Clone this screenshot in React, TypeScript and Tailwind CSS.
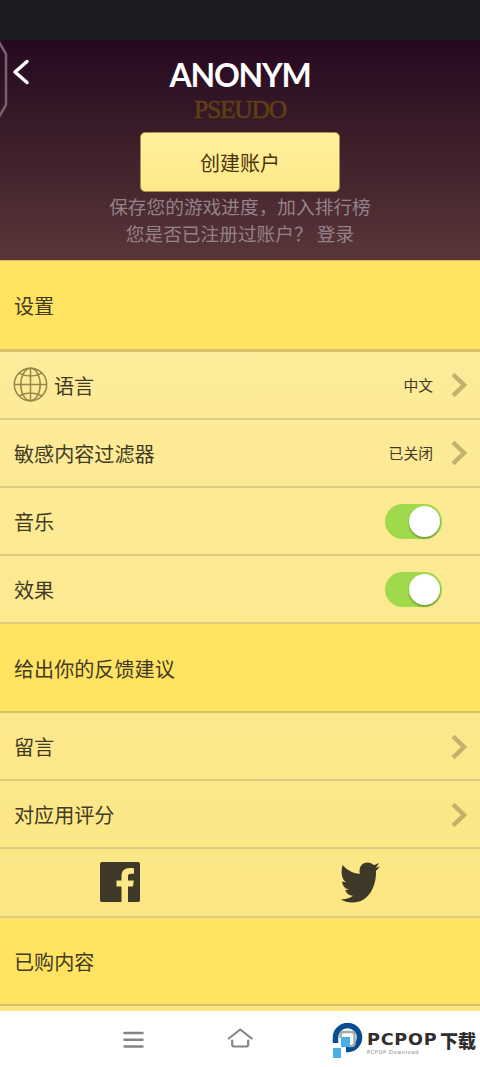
import type { ReactNode } from 'react'

const SANS = "font-['Noto_Sans_CJK_SC',sans-serif]"

function Chevron() {
  return (
    <svg width="16" height="26" viewBox="0 0 16 26" fill="none" stroke="#c3b16d" strokeWidth="4.4">
      <path d="M2 2.3 13 13 2 23.7" />
    </svg>
  )
}

function Globe() {
  return (
    <svg
      width="35"
      height="35"
      viewBox="0 0 35 35"
      fill="none"
      stroke="#948748"
      strokeWidth="1.5"
      className="mr-1.5 shrink-0"
    >
      <circle cx="17.5" cy="17.5" r="16.2" />
      <ellipse cx="17.5" cy="17.5" rx="9.7" ry="16.2" />
      <path d="M17.5 1.3v32.4M1.3 17.5h32.4M6 6.2q11.5 5.8 23 0M6 28.8q11.5-5.8 23 0" />
    </svg>
  )
}

function Toggle() {
  return (
    <div className="mr-[25px] flex h-[35px] w-[57px] items-center justify-end rounded-full bg-[#a0d94b] pr-0.5">
      <div className="h-[31px] w-[31px] rounded-full bg-white shadow-[0_1.5px_2px_rgba(50,90,20,0.55)]" />
    </div>
  )
}

function Section({ title, className = 'h-[88.6px] border-b-2' }: { title: string; className?: string }) {
  return (
    <div className={`flex shrink-0 items-center border-[#d7c16a] bg-[#ffe361] pt-[3px] pl-3.5 text-[20.1px] ${className}`}>
      {title}
    </div>
  )
}

function Row({ label, icon, children }: { label: string; icon?: ReactNode; children: ReactNode }) {
  return (
    <div className="flex h-[68.2px] shrink-0 items-center border-b-2 border-[#dccb83] pl-[13px] text-[20.1px]">
      {icon}
      <span className={icon ? 'pt-0.5' : 'pt-0.5 pl-px'}>{label}</span>
      <div className="ml-auto flex items-center pt-px pr-[13px]">{children}</div>
    </div>
  )
}

function Value({ text }: { text: string }) {
  return <span className="mr-[18px] pt-px text-[14.8px]">{text}</span>
}

function PcpopLogo() {
  return (
    <div className="flex items-start">
      <svg width="32" height="37" viewBox="0 0 32 37">
        <path d="M3.5 20V14.5a12 12 0 1 1 12.5 12h-2" fill="none" stroke="#074d91" strokeWidth="5.5" />
        <path d="M8.5 15v-3q0-3 3-3h8q3 0 3 3v8q0 3-3 3h-3" fill="none" stroke="#aaa9a8" strokeWidth="2.5" />
        <path d="M9 14h9v10H9v11H1V25h8z" fill="#4aaee8" />
      </svg>
      <div className="ml-[3px] mt-[7px] w-[112px] whitespace-nowrap text-[#302e2e]">
        <div className="flex h-5 items-center">
          <span className="w-[73px] origin-left scale-x-[1.1] font-['DejaVu_Sans',sans-serif] text-[16px] font-bold tracking-[0.7px]">
            PCPOP
          </span>
          <span className="text-[18px] font-black">下载</span>
        </div>
        <div className="font-['DejaVu_Sans',sans-serif] text-[5px] leading-none tracking-[0.65px] text-[#777]">
          PCPOP Download
        </div>
      </div>
    </div>
  )
}

export default function App() {
  return (
    <div className={`flex h-[1067px] w-[480px] flex-col overflow-hidden bg-white leading-none text-[#423a25] ${SANS}`}>
      <div className="h-10 shrink-0 bg-[#1c1c20]" />

      <header className="relative flex h-[220px] shrink-0 flex-col items-center bg-linear-to-b from-[#260821] via-[#3e202b] to-[#5a3638]">
        {/* edge handle */}
        <svg className="absolute left-0 top-0" width="9" height="80" viewBox="0 0 9 80" fill="none">
          <path d="M-1 2 6 14v51L-1 77" stroke="#76616f" strokeWidth="2.5" />
        </svg>
        <svg className="absolute left-3 top-[19px]" width="18" height="26" viewBox="0 0 18 26" fill="none">
          <path d="M15 2.5 3 13l12 10.5" stroke="white" strokeWidth="3.5" strokeLinecap="round" strokeLinejoin="round" />
        </svg>
        <h1 className="mt-[19px] h-8 font-['Lato',sans-serif] text-[32px] leading-8 font-bold tracking-[-1.2px] text-white">
          ANONYM
        </h1>
        <div className="mt-[7px] h-7 font-['Liberation_Serif',serif] text-[25.5px] leading-6 tracking-[-1.2px] text-[#5f3f13] [-webkit-text-stroke:0.6px_#5f3f13]">
          PSEUDO
        </div>
        <button className="mt-1.5 h-[60px] w-[200px] shrink-0 rounded-[5px] border border-[#a88f52] bg-linear-to-b from-[#fff09c] to-[#ffe989] pt-0.5 text-[20px] text-[#493508]">
          创建账户
        </button>
        <p className="text-center text-[18.7px] leading-[27px] whitespace-pre text-[#94828a]">
          保存您的游戏进度，加入排行榜
          <br />
          {'您是否已注册过账户？ 登录'}
        </p>
      </header>

      <main className="flex h-[751px] shrink-0 flex-col overflow-hidden bg-linear-to-b from-[#fdec9e] to-[#fce680]">
        <Section title="设置" className="h-[91.6px] border-t border-b-[3px]" />
        <Row label="语言" icon={<Globe />}>
          <Value text="中文" />
          <Chevron />
        </Row>
        <Row label="敏感内容过滤器">
          <Value text="已关闭" />
          <Chevron />
        </Row>
        <Row label="音乐">
          <Toggle />
        </Row>
        <Row label="效果">
          <Toggle />
        </Row>
        <Section title="给出你的反馈建议" />
        <Row label="留言">
          <Chevron />
        </Row>
        <Row label="对应用评分">
          <Chevron />
        </Row>
        <div className="grid h-[68.2px] shrink-0 grid-cols-2 place-items-center border-b-2 border-[#dccb83]">
          <svg width="40" height="40" viewBox="0 0 40 40" fill="#3e3829">
            <path d="M2 0h36a2 2 0 0 1 2 2v36a2 2 0 0 1-2 2H28V24.5h5l.8-6H28v-4c0-1.8.6-2.8 3-2.8h3V6.3C33 6.1 31.2 6 29.5 6 24.5 6 21.5 9 21.5 14v4.500h-5v6h5V40H2a2 2 0 0 1-2-2V2a2 2 0 0 1 2-2z" />
          </svg>
          <svg width="41" height="41" viewBox="0 0 41 41" fill="#3e3829">
            <path d="M2.5 3C7 8 12.5 11.3 19.8 12 18.5 5 22 .5 27.5.5c2.5 0 4.7 1 6.2 2.6 2-.4 3.7-1.2 5-2-.6 2-1.8 3.5-3.3 4.5 1.600-.2 3.2-.6 4.6-1.2-1.1 1.7-2.5 3.2-4 4.3C36.5 24 29 40.5 12.5 40.5 8 40.5 4 39.3 1 37.2c4.5.4 8.7-.8 12-3.4-4-.1-6.7-2.5-7.7-6 1.3.2 2.4.2 3.7-.1-4.1-1-6.8-4.5-6.8-8.5 1.2.7 2.5 1 3.8 1C2 17.3.5 11.5 2.5 3z" />
          </svg>
        </div>
        <Section title="已购内容" />
      </main>

      <nav className="flex h-14 shrink-0 items-start bg-white">
        <svg className="ml-[123px] mt-5" width="21" height="18" viewBox="0 0 21 18" stroke="#858585" strokeWidth="2.5" strokeLinecap="round">
          <path d="M1.5 2h18M1.5 8.7h18M1.5 15.4h18" />
        </svg>
        <svg
          className="ml-[83px] mt-4"
          width="27"
          height="22"
          viewBox="0 0 27 22"
          fill="none"
          stroke="#858585"
          strokeWidth="2.2"
          strokeLinecap="round"
          strokeLinejoin="round"
        >
          <path d="M1.8 11.5 13.2 2.5l11.5 9M5.2 13.5v4q0 2 2 2h12q2 0 2-2v-4" />
        </svg>
        <div className="ml-[78px] mt-[12px]">
          <PcpopLogo />
        </div>
      </nav>
    </div>
  )
}
